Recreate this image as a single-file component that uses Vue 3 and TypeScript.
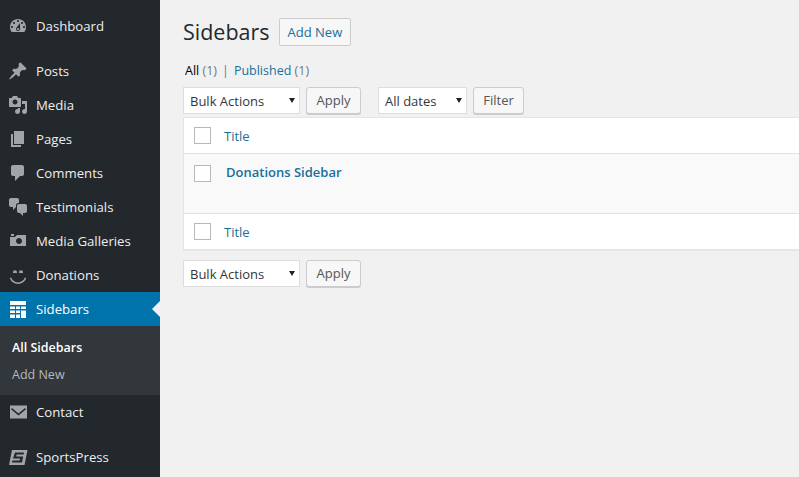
<script setup lang="ts">
interface MenuItem {
  label: string;
  path: string;
  gap?: boolean;
}

const topItems: MenuItem[] = [
  { label: 'Dashboard', path: 'M3.76 16h12.48c1.1-1.37 1.76-3.11 1.76-5 0-4.42-3.58-8-8-8s-8 3.58-8 8c0 1.89.66 3.63 1.76 5zM10 4c.55 0 1 .45 1 1s-.45 1-1 1-1-.45-1-1 .45-1 1-1zM6 6c.55 0 1 .45 1 1s-.45 1-1 1-1-.45-1-1 .45-1 1-1zm8 0c.55 0 1 .45 1 1s-.45 1-1 1-1-.45-1-1 .45-1 1-1zm-5.37 5.55L12 7v6c0 1.1-.9 2-2 2s-2-.9-2-2c0-.57.24-1.08.63-1.45zM4 10c.55 0 1 .45 1 1s-.45 1-1 1-1-.45-1-1 .45-1 1-1zm12 0c.55 0 1 .45 1 1s-.45 1-1 1-1-.45-1-1 .45-1 1-1zm-5 3c0-.55-.45-1-1-1s-1 .45-1 1 .45 1 1 1 1-.45 1-1z', gap: true },
  { label: 'Posts', path: 'M10.44 3.02l1.82-1.82 6.36 6.35-1.83 1.82c-1.05-.68-2.48-.57-3.41.36l-.75.75c-.92.93-1.04 2.35-.35 3.41l-1.83 1.82-2.41-2.41-2.8 2.79c-.42.42-3.38 2.71-3.8 2.29s1.86-3.39 2.28-3.81l2.79-2.79L4.1 9.36l1.83-1.82c1.05.69 2.48.57 3.4-.36l.75-.75c.93-.92 1.05-2.35.36-3.41z' },
  { label: 'Media', path: 'M13 11V4c0-.55-.45-1-1-1h-1.67L9 1H5L3.67 3H2c-.55 0-1 .45-1 1v7c0 .55.45 1 1 1h10c.55 0 1-.45 1-1zM7 4.5c1.38 0 2.5 1.12 2.5 2.5S8.38 9.5 7 9.5 4.5 8.38 4.5 7 5.62 4.5 7 4.5zM14 6h5v10.5c0 1.38-1.12 2.5-2.5 2.5S14 17.88 14 16.5s1.12-2.5 2.5-2.5c.17 0 .34.02.5.05V9h-3V6zm-4 8.05V13h2v3.5c0 1.38-1.12 2.5-2.5 2.5S7 17.88 7 16.5 8.12 14 9.5 14c.17 0 .34.02.5.05z' },
  { label: 'Pages', path: 'M6 15V2h10v13H6zm-1 1h8v2H3V5h2v11z' },
  { label: 'Comments', path: 'M5 2h9c1.1 0 2 .9 2 2v7c0 1.1-.9 2-2 2h-2l-5 5v-5H5c-1.1 0-2-.9-2-2V4c0-1.1.9-2 2-2z' },
  { label: 'Testimonials', path: 'M11 6h-.82C9.07 6 8 7.2 8 8.16V10l-3 3v-3H3c-1.1 0-2-.9-2-2V3c0-1.1.9-2 2-2h6c1.1 0 2 .9 2 2v3zm0 1h6c1.1 0 2 .9 2 2v5c0 1.1-.9 2-2 2h-2v3l-3-3h-1c-1.1 0-2-.9-2-2V9c0-1.1.9-2 2-2z' },
  { label: 'Media Galleries', path: 'M6 5V3H3v2h3zm12 10V4H9L7 6H2v9h16zm-7-8c1.66 0 3 1.34 3 3s-1.34 3-3 3-3-1.34-3-3 1.34-3 3-3z' },
  { label: 'Donations', path: 'M7 5.2c1.1 0 2 .89 2 2 0 .37-.11.71-.28 1C8.72 8.2 8 8 7 8s-1.72.2-1.72.2c-.17-.29-.28-.63-.28-1 0-1.11.9-2 2-2zm6 0c1.11 0 2 .89 2 2 0 .37-.11.71-.28 1 0 0-.72-.2-1.72-.2s-1.72.2-1.72.2c-.17-.29-.28-.63-.28-1 0-1.11.89-2 2-2zm-3 13.7c3.72 0 7.03-2.36 8.23-5.88l-1.32-.46C15.9 15.52 13.12 17.5 10 17.5s-5.9-1.98-6.91-4.94l-1.32.46c1.2 3.52 4.51 5.88 8.23 5.88z' },
];

const bottomItems: MenuItem[] = [
  { label: 'Contact', path: 'M2 3.5h17v13H2zM4 6l6.5 5.5L17 6l1 1.2-7.5 6.3L3 7.2z', gap: true },
  { label: 'SportsPress', path: 'M4 3h15.5l-3 15H1zM7 5.5h9l-.4 2h-7l-.4 2h7l-1.2 6H4l.4-2h7.2l.4-2H5z' },
];
</script>

<template>
  <div class="page">
    <aside class="sidebar">
      <div v-for="item in topItems" :key="item.label" class="menu-item" :class="{ gap: item.gap }">
        <svg class="icon" viewBox="0 0 20 20"><path :d="item.path" fill-rule="evenodd" /></svg>
        <span>{{ item.label }}</span>
      </div>
      <div class="menu-item current">
        <svg class="icon" viewBox="0 0 20 20">
          <path d="M2 2h16v4H2zM2 7.5h5V10H2zM8 7.5h4V10H8zM13 7.5h5V10h-5zM2 11.5h5V14H2zM8 11.5h4V14H8zM13 11.5h5V19h-5zM2 15.5h5V19H2zM8 15.5h4V19H8z" />
        </svg>
        <span>Sidebars</span>
      </div>
      <div class="submenu">
        <div class="sub-item active">All Sidebars</div>
        <div class="sub-item">Add New</div>
      </div>
      <div v-for="item in bottomItems" :key="item.label" class="menu-item" :class="{ gap: item.gap }">
        <svg class="icon" viewBox="0 0 20 20"><path :d="item.path" fill-rule="evenodd" /></svg>
        <span>{{ item.label }}</span>
      </div>
    </aside>

    <main class="content">
      <div class="heading">
        <h1>Sidebars</h1>
        <a class="add-new">Add New</a>
      </div>
      <div class="filters">
        <b>All</b> <i>(1)</i><em>|</em><a>Published</a> <i>(1)</i>
      </div>
      <div class="toolbar">
        <div class="select bulk">Bulk Actions</div>
        <button class="btn apply">Apply</button>
        <div class="select dates">All dates</div>
        <button class="btn filter">Filter</button>
      </div>
      <div class="table">
        <div class="row head">
          <span class="check"></span>
          <a>Title</a>
        </div>
        <div class="row body">
          <span class="check"></span>
          <a class="name">Donations Sidebar</a>
        </div>
        <div class="row foot">
          <span class="check"></span>
          <a>Title</a>
        </div>
      </div>
      <div class="toolbar bottom">
        <div class="select bulk">Bulk Actions</div>
        <button class="btn apply">Apply</button>
      </div>
    </main>
  </div>
</template>

<style>
html,
body {
  margin: 0;
  overflow: hidden;
}
</style>

<style scoped>
.page {
  display: flex;
  width: 799px;
  height: 477px;
  overflow: hidden;
  background: #f1f1f1;
  font-family: "Open Sans", "Noto Sans", sans-serif;
  font-size: 13px;
  color: #444;
}
.sidebar {
  flex: none;
  width: 160px;
  padding-top: 9px;
  box-sizing: border-box;
  background: #23282d;
}
.menu-item {
  display: flex;
  align-items: center;
  height: 34px;
  color: #eee;
  font-size: 13.2px;
}
.menu-item.gap {
  margin-bottom: 11px;
}
.icon {
  flex: none;
  width: 20px;
  height: 20px;
  margin: 0 8px;
  fill: #a0a5aa;
}
.current {
  position: relative;
  background: #0073aa;
  color: #fff;
}
.current .icon {
  fill: #fff;
}
.current::after {
  content: "";
  position: absolute;
  right: 0;
  top: 9px;
  border: 8px solid transparent;
  border-right-color: #f1f1f1;
  border-left-width: 0;
}
.submenu {
  display: flex;
  flex-direction: column;
  height: 69px;
  padding-top: 8px;
  box-sizing: border-box;
  background: #32373c;
}
.sub-item {
  height: 27px;
  line-height: 27px;
  padding-left: 12px;
  font-size: 12.5px;
  color: #b4b9be;
}
.sub-item.active {
  font-weight: 600;
  color: #fff;
}
.content {
  flex: 1;
  min-width: 0;
  padding-left: 23px;
}
.heading {
  display: flex;
  align-items: center;
  height: 28px;
  margin-top: 18px;
}
h1 {
  margin: -2px 9px 0 0;
  font-size: 21.5px;
  font-weight: 400;
  color: #23282d;
}
.add-new {
  display: flex;
  align-items: center;
  height: 26px;
  padding: 0 8px;
  border: 1px solid #ccc;
  border-radius: 2px;
  background: #f7f7f7;
  color: #1a6f99;
  font-size: 13px;
}
.filters {
  height: 20px;
  margin-top: 15px;
  padding-left: 2px;
  line-height: 20px;
  font-size: 12.5px;
  white-space: nowrap;
}
.filters b {
  font-weight: 400;
  color: #000;
}
.filters i {
  font-style: normal;
  color: #72777c;
}
.filters em {
  margin: 0 5px;
  font-style: normal;
  color: #72777c;
}
.filters a,
.row a {
  color: #1a6f99;
}
.toolbar {
  display: flex;
  align-items: center;
  height: 27px;
  margin-top: 6px;
}
.toolbar.bottom {
  margin-top: 10px;
}
.select {
  position: relative;
  height: 27px;
  padding-left: 6px;
  box-sizing: border-box;
  border: 1px solid #ddd;
  background: #fff;
  line-height: 27px;
  font-size: 13px;
  color: #32373c;
}
.select::after {
  content: "";
  position: absolute;
  right: 4px;
  top: 10px;
  border: 3.5px solid transparent;
  border-top: 5px solid #222;
  border-bottom-width: 0;
}
.bulk {
  width: 117px;
}
.dates {
  width: 89px;
  margin-left: 17px;
}
.btn {
  height: 27px;
  margin-left: 6px;
  padding: 0 0 2px;
  border: 1px solid #ccc;
  border-radius: 3px;
  background: #f7f7f7;
  box-shadow: 0 1px 0 #ccc;
  font: inherit;
  font-size: 13px;
  color: #555;
}
.apply {
  width: 55px;
}
.filter {
  width: 51px;
}
.table {
  margin-top: 3px;
  border: 1px solid #e5e5e5;
  border-right: 0;
  background: #fff;
  box-shadow: 0 1px 1px rgba(0, 0, 0, 0.04);
}
.row {
  display: flex;
  align-items: center;
  height: 35px;
  padding-left: 10px;
  font-size: 13px;
}
.head {
  border-bottom: 1px solid #e1e1e1;
}
.foot {
  border-top: 1px solid #e1e1e1;
}
.body {
  align-items: flex-start;
  height: 59px;
  background: #f9f9f9;
}
.check {
  flex: none;
  width: 15px;
  height: 15px;
  margin-right: 13px;
  border: 1px solid #b4b9be;
  background: #fff;
}
.body .check {
  margin-top: 11px;
  margin-right: 15px;
}
.name {
  margin-top: 9px;
  font-weight: 600;
  font-size: 13px;
}
</style>
